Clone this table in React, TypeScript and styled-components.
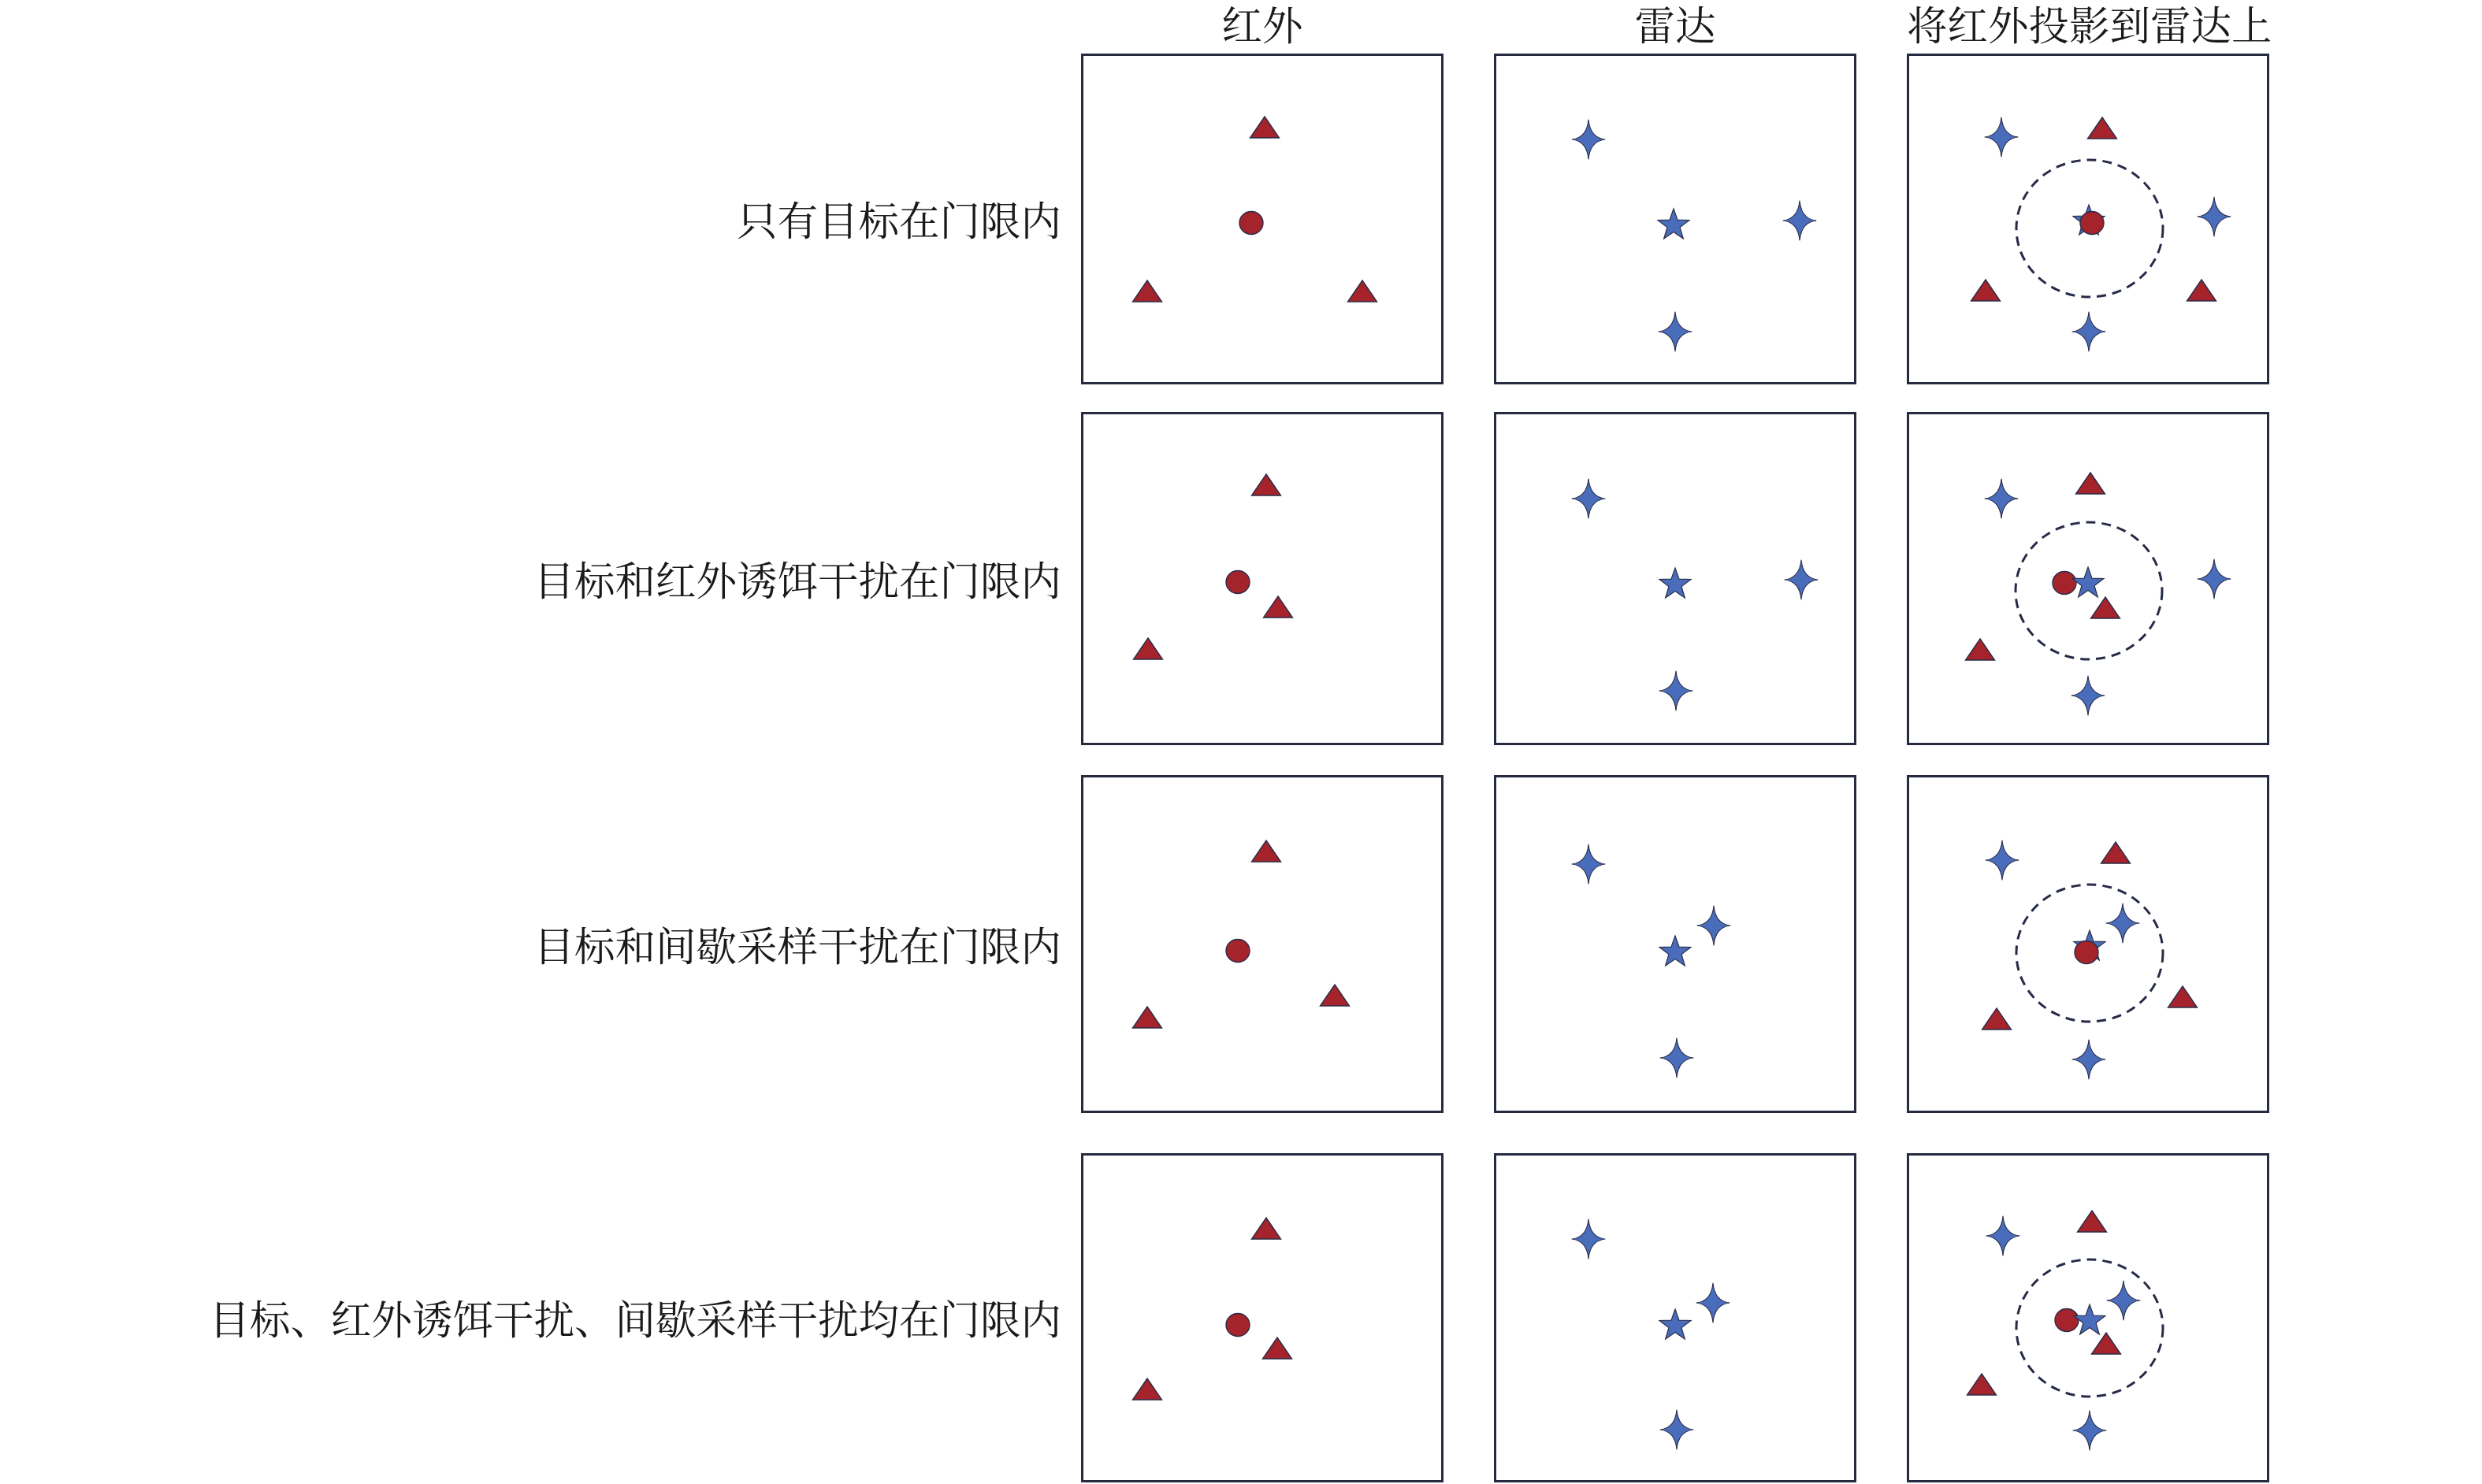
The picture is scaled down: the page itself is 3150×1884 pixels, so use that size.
import React from "react"
import styled, { createGlobalStyle } from "styled-components"

const GlobalStyle = createGlobalStyle`
  html, body {
    margin: 0;
    padding: 0;
    background: #ffffff;
  }
  body {
    font-family: "Noto Serif CJK SC", "Noto Sans CJK SC", "Liberation Serif", serif;
    color: #1a1a1a;
  }
`

const BOX_W = 460
const LABEL_W = 1372

const Page = styled.div`
  width: 3150px;
  height: 1884px;
  overflow: hidden;
  display: flex;
  flex-direction: column;
`

const HeaderRow = styled.div`
  display: flex;
  align-items: flex-start;
  height: 68px;
  padding-left: ${LABEL_W}px;
  gap: 64px;
`

const HeaderCell = styled.div`
  width: ${BOX_W}px;
  text-align: center;
  font-size: 51.5px;
  line-height: 58px;
  font-weight: 400;
  white-space: nowrap;
`

const Row = styled.div<{ $height: number; $gap: number }>`
  display: flex;
  align-items: center;
  height: ${({ $height }) => $height}px;
  margin-top: ${({ $gap }) => $gap}px;
`

const Label = styled.div`
  width: ${LABEL_W}px;
  box-sizing: border-box;
  padding-right: 25px;
  text-align: right;
  font-size: 51.5px;
  line-height: 1;
  white-space: nowrap;
`

const Panels = styled.div`
  display: flex;
  gap: 64px;
  height: 100%;
`

const Panel = styled.div`
  width: ${BOX_W}px;
  height: 100%;
  box-sizing: border-box;
  border: 3px solid #262b42;
  background: #ffffff;

  svg {
    display: block;
    width: 100%;
    height: 100%;
  }
`

const RED = "#a5232b"
const BLUE = "#4a6dbb"
const EDGE = "#2a2d4a"

type Mark =
  | { k: "tri"; x: number; y: number }
  | { k: "dot"; x: number; y: number }
  | { k: "cross"; x: number; y: number }
  | { k: "star"; x: number; y: number }
  | { k: "ring"; x: number; y: number }

// triangle: x = centre, y = apex
const Triangle = ({ x, y }: { x: number; y: number }) => (
  <polygon
    points={`${x},${y} ${x + 18.5},${y + 27} ${x - 18.5},${y + 27}`}
    fill={RED}
    stroke={EDGE}
    strokeWidth={1.4}
    strokeLinejoin="miter"
  />
)

const Dot = ({ x, y }: { x: number; y: number }) => (
  <ellipse cx={x} cy={y} rx={15} ry={14.5} fill={RED} stroke={EDGE} strokeWidth={1.4} />
)

// four pointed star with thin concave arms
const Cross = ({ x, y }: { x: number; y: number }) => (
  <path
    transform={`translate(${x} ${y})`}
    d="M0,-25 Q2.2,-2.2 21,0 Q2.2,2.2 0,25 Q-2.2,2.2 -21,0 Q-2.2,-2.2 0,-25 Z"
    fill={BLUE}
    stroke={EDGE}
    strokeWidth={1.1}
    strokeLinejoin="round"
  />
)

const starPoints = (() => {
  const pts: string[] = []
  for (let i = 0; i < 10; i++) {
    const r = i % 2 === 0 ? 21 : 8.5
    const a = (Math.PI / 5) * i - Math.PI / 2
    pts.push(`${(r * Math.cos(a)).toFixed(2)},${(r * Math.sin(a) + 2).toFixed(2)}`)
  }
  return pts.join(" ")
})()

const Star = ({ x, y }: { x: number; y: number }) => (
  <polygon
    transform={`translate(${x} ${y})`}
    points={starPoints}
    fill={BLUE}
    stroke={EDGE}
    strokeWidth={1.2}
    strokeLinejoin="miter"
  />
)

const Ring = ({ x, y }: { x: number; y: number }) => (
  <ellipse
    cx={x}
    cy={y}
    rx={93}
    ry={87}
    fill="none"
    stroke="#262b48"
    strokeWidth={3}
    strokeDasharray="12 8"
  />
)

const renderMark = (m: Mark, i: number) => {
  switch (m.k) {
    case "tri":
      return <Triangle key={i} x={m.x} y={m.y} />
    case "dot":
      return <Dot key={i} x={m.x} y={m.y} />
    case "cross":
      return <Cross key={i} x={m.x} y={m.y} />
    case "star":
      return <Star key={i} x={m.x} y={m.y} />
    case "ring":
      return <Ring key={i} x={m.x} y={m.y} />
  }
}

interface RowData {
  label: string
  height: number
  gap: number
  panels: Mark[][]
}

const rows: RowData[] = [
  {
    label: "只有目标在门限内",
    height: 420,
    gap: 0,
    panels: [
      [
        { k: "tri", x: 233, y: 80 },
        { k: "dot", x: 216, y: 215 },
        { k: "tri", x: 84, y: 288 },
        { k: "tri", x: 357, y: 288 },
      ],
      [
        { k: "cross", x: 120, y: 109 },
        { k: "star", x: 228, y: 216 },
        { k: "cross", x: 388, y: 212 },
        { k: "cross", x: 230, y: 353 },
      ],
      [
        { k: "ring", x: 232, y: 222 },
        { k: "cross", x: 120, y: 106 },
        { k: "tri", x: 248, y: 81 },
        { k: "star", x: 231, y: 211 },
        { k: "dot", x: 235, y: 215 },
        { k: "cross", x: 390, y: 207 },
        { k: "tri", x: 100, y: 287 },
        { k: "tri", x: 374, y: 287 },
        { k: "cross", x: 231, y: 353 },
      ],
    ],
  },
  {
    label: "目标和红外诱饵干扰在门限内",
    height: 423,
    gap: 35,
    panels: [
      [
        { k: "tri", x: 235, y: 79 },
        { k: "dot", x: 199, y: 216 },
        { k: "tri", x: 250, y: 234 },
        { k: "tri", x: 85, y: 287 },
      ],
      [
        { k: "cross", x: 120, y: 110 },
        { k: "star", x: 230, y: 217 },
        { k: "cross", x: 390, y: 213 },
        { k: "cross", x: 231, y: 354 },
      ],
      [
        { k: "ring", x: 231, y: 227 },
        { k: "cross", x: 120, y: 110 },
        { k: "tri", x: 233, y: 77 },
        { k: "dot", x: 200, y: 217 },
        { k: "star", x: 230, y: 216 },
        { k: "tri", x: 252, y: 235 },
        { k: "cross", x: 390, y: 212 },
        { k: "tri", x: 93, y: 288 },
        { k: "cross", x: 230, y: 360 },
      ],
    ],
  },
  {
    label: "目标和间歇采样干扰在门限内",
    height: 429,
    gap: 38,
    panels: [
      [
        { k: "tri", x: 235, y: 83 },
        { k: "dot", x: 199, y: 223 },
        { k: "tri", x: 322, y: 266 },
        { k: "tri", x: 84, y: 294 },
      ],
      [
        { k: "cross", x: 120, y: 113 },
        { k: "cross", x: 279, y: 191 },
        { k: "star", x: 230, y: 223 },
        { k: "cross", x: 232, y: 359 },
      ],
      [
        { k: "ring", x: 232, y: 226 },
        { k: "cross", x: 121, y: 108 },
        { k: "tri", x: 265, y: 85 },
        { k: "cross", x: 274, y: 188 },
        { k: "star", x: 232, y: 216 },
        { k: "dot", x: 228, y: 225 },
        { k: "tri", x: 350, y: 268 },
        { k: "tri", x: 114, y: 296 },
        { k: "cross", x: 231, y: 361 },
      ],
    ],
  },
  {
    label: "目标、红外诱饵干扰、间歇采样干扰均在门限内",
    height: 418,
    gap: 51,
    panels: [
      [
        { k: "tri", x: 235, y: 82 },
        { k: "dot", x: 199, y: 218 },
        { k: "tri", x: 249, y: 234 },
        { k: "tri", x: 84, y: 286 },
      ],
      [
        { k: "cross", x: 120, y: 109 },
        { k: "cross", x: 278, y: 190 },
        { k: "star", x: 230, y: 217 },
        { k: "cross", x: 232, y: 351 },
      ],
      [
        { k: "ring", x: 232, y: 222 },
        { k: "cross", x: 122, y: 105 },
        { k: "tri", x: 235, y: 73 },
        { k: "cross", x: 275, y: 187 },
        { k: "dot", x: 203, y: 212 },
        { k: "star", x: 232, y: 211 },
        { k: "tri", x: 253, y: 228 },
        { k: "tri", x: 95, y: 280 },
        { k: "cross", x: 232, y: 352 },
      ],
    ],
  },
]

const headers = ["红外", "雷达", "将红外投影到雷达上"]

const App = (): JSX.Element => (
  <>
    <GlobalStyle />
    <Page>
      <HeaderRow>
        {headers.map((h) => (
          <HeaderCell key={h}>{h}</HeaderCell>
        ))}
      </HeaderRow>
      {rows.map((row) => (
        <Row key={row.label} $height={row.height} $gap={row.gap}>
          <Label>{row.label}</Label>
          <Panels>
            {row.panels.map((marks, pi) => (
              <Panel key={pi}>
                <svg viewBox={`3 3 ${BOX_W - 6} ${row.height - 6}`} preserveAspectRatio="none">
                  {marks.map(renderMark)}
                </svg>
              </Panel>
            ))}
          </Panels>
        </Row>
      ))}
    </Page>
  </>
)

export default App
